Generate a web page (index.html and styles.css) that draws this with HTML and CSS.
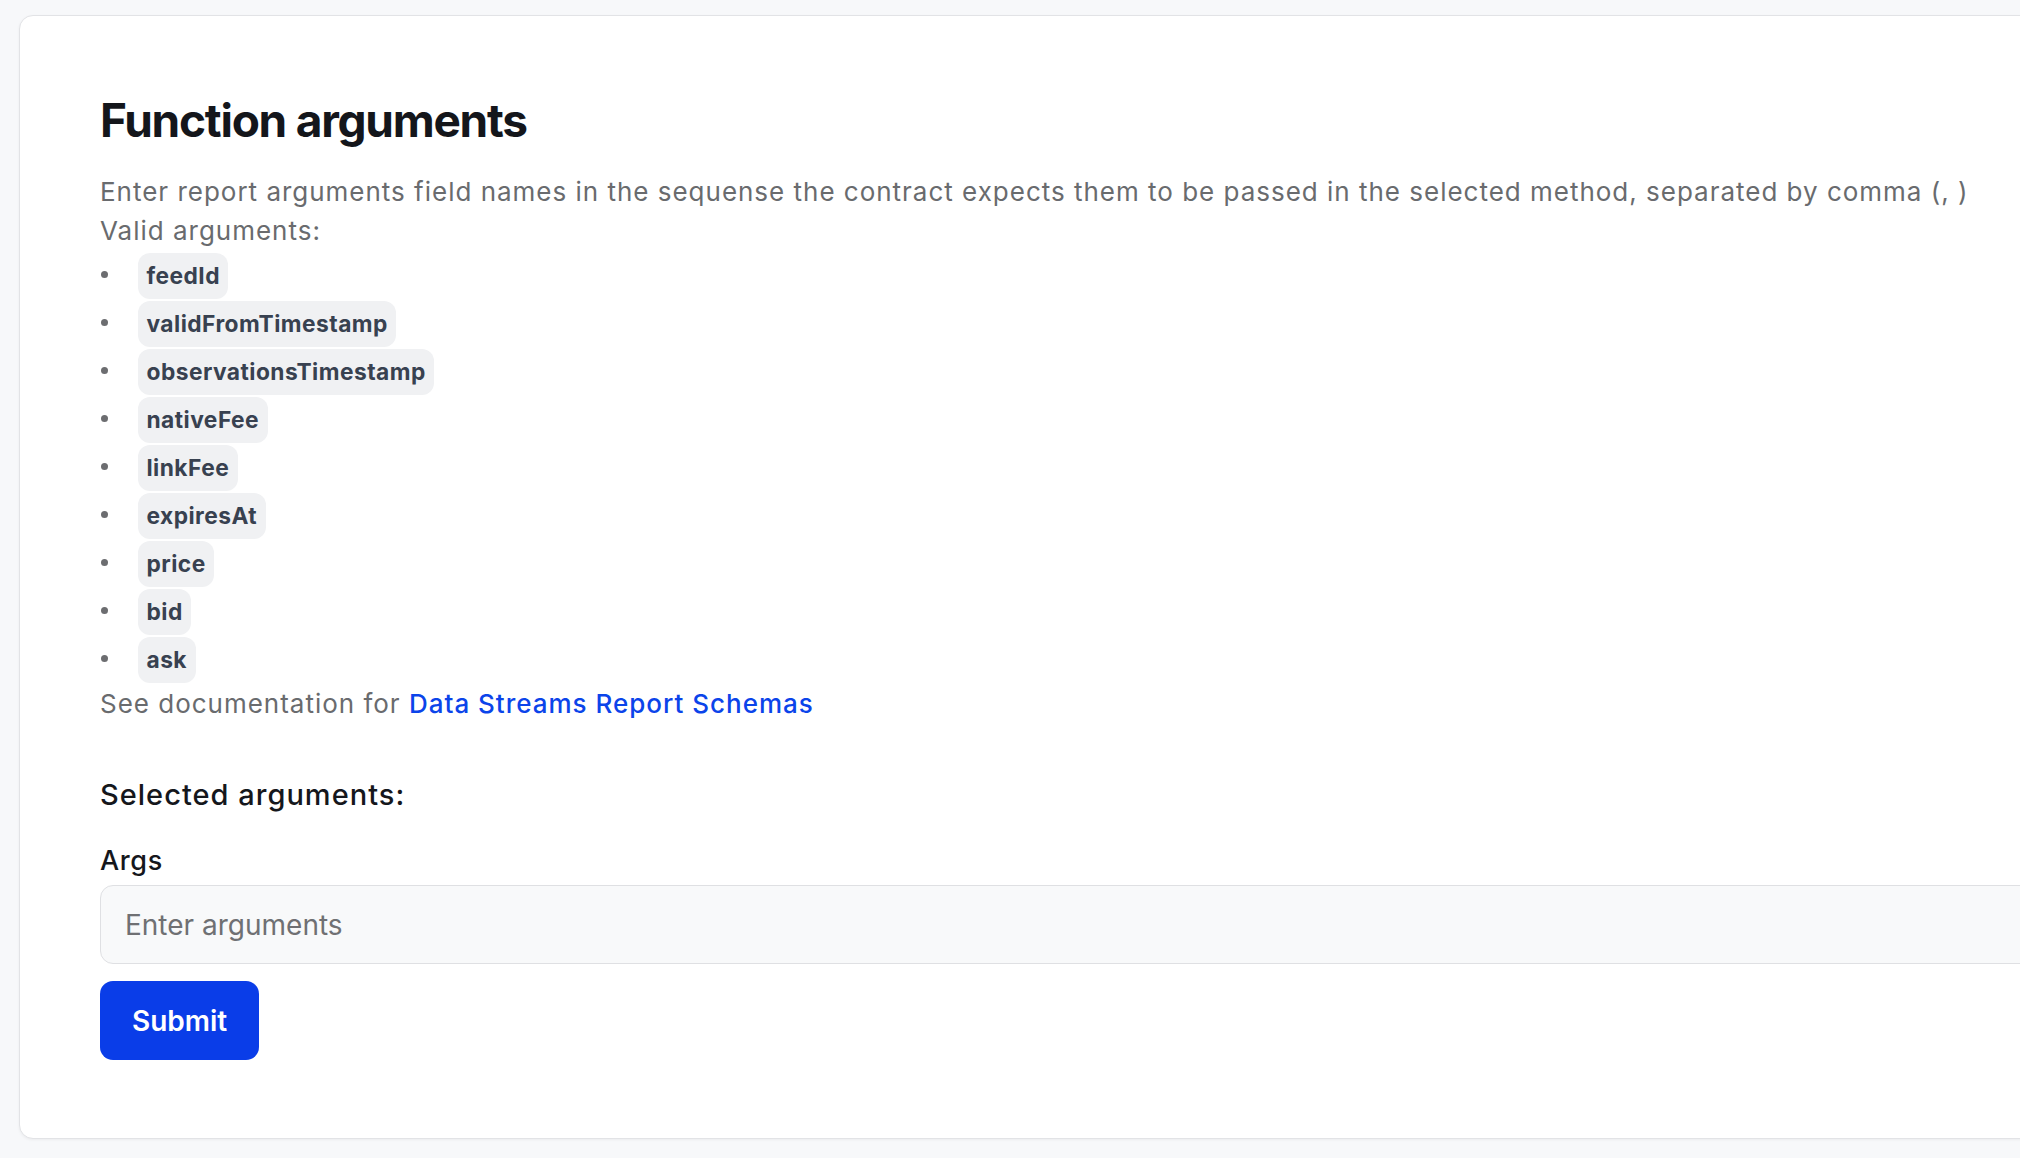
FILE: index.html
```html
<!DOCTYPE html>
<html lang="en">
<head>
<meta charset="utf-8">
<title>Function arguments</title>
<link rel="stylesheet" href="styles.css">
</head>
<body>
<div class="page">
  <section class="card">
    <h1 class="title">Function arguments</h1>
    <p class="desc">Enter report arguments field names in the sequense the contract expects them to be passed in the selected method, separated by comma (, )<br>Valid arguments:</p>
    <ul class="arg-list">
      <li class="arg-item"><code class="chip">feedId</code></li>
      <li class="arg-item"><code class="chip">validFromTimestamp</code></li>
      <li class="arg-item"><code class="chip">observationsTimestamp</code></li>
      <li class="arg-item"><code class="chip">nativeFee</code></li>
      <li class="arg-item"><code class="chip">linkFee</code></li>
      <li class="arg-item"><code class="chip">expiresAt</code></li>
      <li class="arg-item"><code class="chip">price</code></li>
      <li class="arg-item"><code class="chip">bid</code></li>
      <li class="arg-item"><code class="chip">ask</code></li>
    </ul>
    <p class="desc">See documentation for <a class="doc-link" href="#">Data Streams Report Schemas</a></p>
    <h3 class="subtitle">Selected arguments:</h3>
    <form class="form">
      <label class="label" for="args">Args</label>
      <input class="input" id="args" type="text" placeholder="Enter arguments">
      <button class="submit" type="button">Submit</button>
    </form>
  </section>
</div>
</body>
</html>
```

FILE: styles.css
```css
html, body {
  margin: 0;
  padding: 0;
  overflow: hidden;
}

body {
  background: #f7f8fa;
  font-family: Inter, "Noto Sans", "Liberation Sans", sans-serif;
  width: 2020px;
  height: 1158px;
}

.page {
  padding: 15px 0 0 19px;
  width: 2200px;
}

.card {
  box-sizing: border-box;
  width: 2150px;
  background: #ffffff;
  border: 1.5px solid #e2e3e6;
  border-radius: 14px;
  box-shadow: 0 1px 3px rgba(0, 0, 0, 0.05);
  padding: 76px 80px 78px 80px;
}

.title {
  margin: 0 0 24px 0;
  font-size: 46px;
  line-height: 56px;
  font-weight: 700;
  letter-spacing: -0.027em;
  color: #14161b;
}

.desc {
  margin: 0;
  font-size: 26px;
  line-height: 39px;
  letter-spacing: 0.038em;
  color: #696b6e;
  white-space: nowrap;
}

.arg-list {
  list-style: none;
  margin: 2px 0 0 0;
  padding: 0;
}

.arg-item {
  display: flex;
  align-items: center;
  padding: 1px 0;
}

.arg-item::before {
  content: "";
  width: 7px;
  height: 7px;
  border-radius: 50%;
  background: #6c6d70;
  margin: 0 30px 4px 1px;
  flex: none;
}

.chip {
  font-family: Inter, "Noto Sans", "Liberation Sans", sans-serif;
  font-size: 22.75px;
  line-height: 32px;
  font-weight: 700;
  letter-spacing: 0.02em;
  color: #384150;
  background: #f0f1f3;
  border-radius: 12px;
  padding: 7px 8.5px;
}

.doc-link {
  color: #0b44ea;
  font-weight: 500;
  text-decoration: none;
}

.subtitle {
  margin: 50px 0 0 0;
  font-size: 29px;
  line-height: 44px;
  font-weight: 500;
  letter-spacing: 0.035em;
  color: #15171c;
}

.form {
  display: flex;
  flex-direction: column;
  align-items: flex-start;
  margin: 24px 0 0 0;
}

.label {
  font-size: 27px;
  line-height: 40px;
  font-weight: 500;
  letter-spacing: 0.024em;
  color: #15171c;
  margin-bottom: 4px;
}

.input {
  box-sizing: border-box;
  width: 100%;
  height: 79px;
  margin: 0;
  background: #f8f9fa;
  border: 1.5px solid #dfe0e3;
  border-radius: 13px;
  padding: 0 24px;
  font-family: Inter, "Noto Sans", "Liberation Sans", sans-serif;
  font-size: 28px;
  color: #15171c;
  outline: none;
}

.input::placeholder {
  color: #6f7073;
}

.submit {
  margin-top: 17px;
  height: 79px;
  padding: 0 32px;
  background: #0a3de8;
  color: #ffffff;
  border: none;
  border-radius: 13px;
  font-family: Inter, "Noto Sans", "Liberation Sans", sans-serif;
  font-size: 28px;
  font-weight: 600;
  cursor: pointer;
}
```
